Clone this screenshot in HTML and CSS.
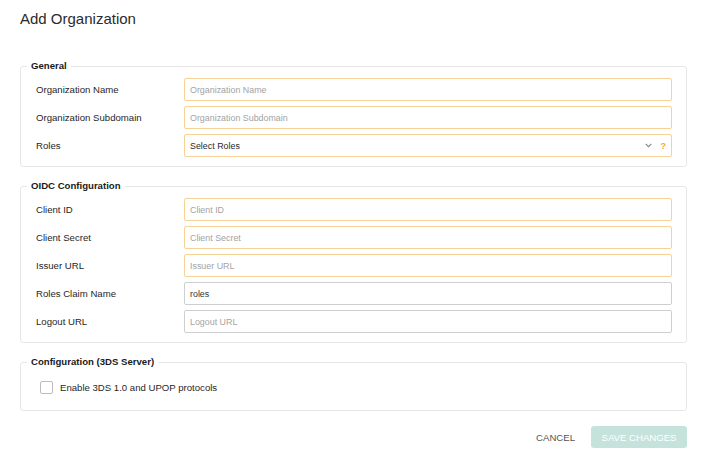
FILE: index.html
```html
<!DOCTYPE html>
<html lang="en">
<head>
<meta charset="utf-8">
<title>Add Organization</title>
<link rel="stylesheet" href="styles.css">
</head>
<body>
<div class="page">
  <h1 class="title">Add Organization</h1>

  <fieldset class="group">
    <legend class="group-legend">General</legend>
    <div class="rows">
      <label class="label">Organization Name</label>
      <input class="field field-warn" type="text" placeholder="Organization Name">
      <label class="label">Organization Subdomain</label>
      <input class="field field-warn" type="text" placeholder="Organization Subdomain">
      <label class="label">Roles</label>
      <div class="field field-warn select">
        <span class="select-text">Select Roles</span>
        <svg class="chevron" width="7" height="5" viewBox="0 0 7 5"><path d="M0.8 1 L3.5 3.7 L6.2 1" fill="none" stroke="#8a8a8a" stroke-width="1.1"/></svg>
        <span class="help">?</span>
      </div>
    </div>
  </fieldset>

  <fieldset class="group">
    <legend class="group-legend">OIDC Configuration</legend>
    <div class="rows">
      <label class="label">Client ID</label>
      <input class="field field-warn" type="text" placeholder="Client ID">
      <label class="label">Client Secret</label>
      <input class="field field-warn" type="text" placeholder="Client Secret">
      <label class="label">Issuer URL</label>
      <input class="field field-warn" type="text" placeholder="Issuer URL">
      <label class="label">Roles Claim Name</label>
      <input class="field" type="text" value="roles">
      <label class="label">Logout URL</label>
      <input class="field" type="text" placeholder="Logout URL">
    </div>
  </fieldset>

  <fieldset class="group group-last">
    <legend class="group-legend">Configuration (3DS Server)</legend>
    <div class="check-row">
      <span class="checkbox"></span>
      <span class="check-label">Enable 3DS 1.0 and UPOP protocols</span>
    </div>
  </fieldset>

  <div class="actions">
    <button class="btn btn-cancel" type="button">CANCEL</button>
    <button class="btn btn-save" type="button">SAVE CHANGES</button>
  </div>
</div>
</body>
</html>
```

FILE: styles.css
```css
* { box-sizing: border-box; }

html, body {
  margin: 0;
  background: #ffffff;
}

body {
  font-family: "Liberation Sans", Arial, Helvetica, sans-serif;
  color: #1f1f1f;
}

.page {
  padding: 10px 33px 0 20px;
}

.title {
  margin: 0;
  font-size: 15px;
  line-height: 18px;
  font-weight: 400;
  color: #2b2b2b;
}

.group {
  margin: 32px 0 0 0;
  padding: 0 14px 9px 15px;
  border: 1px solid #e7e7e7;
  border-radius: 3px;
  min-width: 0;
}

.group + .group {
  margin-top: 13px;
}

.group-legend {
  margin-left: -9px;
  padding: 0 4px;
  font-size: 9.6px;
  line-height: 12px;
  font-weight: 700;
  color: #1a1a1a;
}

.rows {
  display: grid;
  grid-template-columns: 148px 1fr;
  row-gap: 5px;
  align-items: center;
  padding-top: 6px;
}

.label {
  font-size: 9.6px;
  line-height: 12px;
  color: #1f1f1f;
}

.field {
  display: block;
  width: 100%;
  height: 23px;
  margin: 0;
  padding: 0 5px;
  border: 1px solid #cfcfcf;
  border-radius: 2px;
  background: #ffffff;
  font-family: "Liberation Sans", Arial, Helvetica, sans-serif;
  font-size: 8.9px;
  color: #333333;
  outline: none;
}

.field::placeholder {
  color: #a3a3a3;
}

.field-warn {
  border-color: #f6d297;
}

.select {
  display: flex;
  align-items: center;
  padding-right: 5px;
}

.select-text {
  flex: 1;
  color: #2a2a2a;
}

.chevron {
  margin-right: 9px;
}

.help {
  font-size: 9px;
  font-weight: 700;
  color: #f3a93a;
}

.group-last {
  padding-bottom: 11px;
}

.check-row {
  display: flex;
  align-items: center;
  height: 23px;
  margin-top: 8px;
}

.checkbox {
  width: 13px;
  height: 13px;
  margin-left: 4px;
  margin-right: 7px;
  border: 1px solid #bdbdbd;
  border-radius: 2px;
  background: #ffffff;
}

.check-label {
  font-size: 9.6px;
  line-height: 12px;
  color: #1f1f1f;
}

.actions {
  display: flex;
  justify-content: flex-end;
  align-items: center;
  margin-top: 15px;
}

.btn {
  height: 22px;
  border: 0;
  border-radius: 3px;
  font-family: "Liberation Sans", Arial, Helvetica, sans-serif;
  font-size: 9.6px;
  cursor: pointer;
}

.btn-cancel {
  padding: 0 8px;
  background: transparent;
  color: #555555;
}

.btn-save {
  margin-left: 8px;
  padding: 0 10px;
  width: 96px;
  background: #c5e3db;
  color: #ffffff;
}
```
